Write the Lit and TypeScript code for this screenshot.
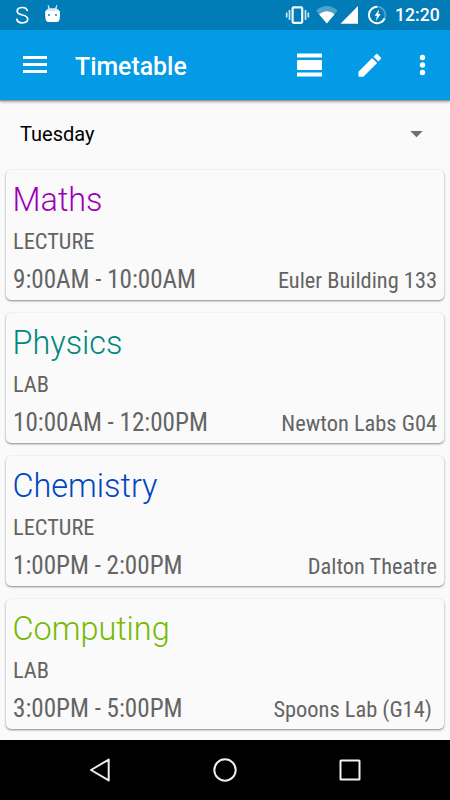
import { LitElement, html, css } from "lit";
import { customElement } from "lit/decorators.js";

interface Lesson {
  subject: string;
  tone: string;
  kind: string;
  time: string;
  place: string;
}

const lessons: Lesson[] = [
  { subject: "Maths", tone: "purple", kind: "LECTURE", time: "9:00AM - 10:00AM", place: "Euler Building 133" },
  { subject: "Physics", tone: "teal", kind: "LAB", time: "10:00AM - 12:00PM", place: "Newton Labs G04" },
  { subject: "Chemistry", tone: "blue", kind: "LECTURE", time: "1:00PM - 2:00PM", place: "Dalton Theatre" },
  { subject: "Computing", tone: "green", kind: "LAB", time: "3:00PM - 5:00PM", place: "Spoons Lab (G14)\u00a0" },
];

@customElement("status-bar")
class StatusBar extends LitElement {
  static styles = css`
    :host {
      display: flex;
      justify-content: space-between;
      height: 30px;
      background: #017cb7;
      color: #fff;
      font: 500 17.600px/31px Roboto, sans-serif;
    }
    svg { display: block; }
    .right { display: flex; }
    .clock { width: 55px; white-space: nowrap; }
  `;
  render() {
    return html`
      <svg width="80" height="30" viewBox="0 0 80 30" fill="none">
        <path d="M27.4 11.2C27 8.9 25 7.5 22.2 7.5c-2.8 0-5 1.4-5 3.7 0 5.200 10.500 2.300 10.500 7.800 0 2.300-2.300 3.800-5.300 3.800-3.200 0-5.500-1.600-5.700-4.200" stroke="#fff" stroke-width="1.700" />
        <path d="M45.500 11.500q.2-1.900 2.900-2.900L47.600 5.300l1-.3 1.300 3.200h5.200L56.400 5l1 .3-.8 3.300q2.700 1 2.900 2.900z" fill="#d3ebf6" />
        <path d="M45.300 11h14.600q.5 4.500-.3 8.500-.5 2.500-3 2.500h-8q-2.500 0-3-2.500-.8-4-.3-8.500z" fill="#fff" />
        <path d="M48 14h2v2h-2zM55 14h2v2h-2z" fill="#48a1cc" />
      </svg>
      <div class="right">
        <svg width="114" height="30" viewBox="281 0 114 30" fill="none">
          <rect x="292.600" y="7.400" width="9.600" height="15.400" rx="1" stroke="#f0f8fb" stroke-width="2.200" />
          <path d="M286.700 12.500v5M289.500 10v10M305.500 10v10M308.300 12.500v5" stroke="#cbe5f1" stroke-width="1.700" />
          <path d="M316 10.600Q326.700 1.500 337.600 10.600L326.800 23.600z" fill="#4da3cd" />
          <path d="M319 14.300Q326.800 8 334.600 14.300L326.800 23.600z" fill="#fff" />
          <path d="M340.500 23.800L358 6v17.800z" fill="#fff" />
          <circle cx="377.200" cy="15" r="8.200" stroke="#4da3cd" stroke-width="1.900" />
          <path d="M377.200 6.800a8.200 8.200 0 1 0 7.400 11.700" stroke="#fff" stroke-width="1.900" />
          <path d="M379 9.500l-4.400 6.200h2.300l-.9 5.300 4.600-7h-2.300z" fill="#fff" />
        </svg>
        <span class="clock">12:20</span>
      </div>
    `;
  }
}

@customElement("title-bar")
class TitleBar extends LitElement {
  static styles = css`
    :host {
      display: flex;
      height: 70px;
      background: #039be5;
      color: #fff;
      box-shadow: 0 1px 1px #9c9690, 0 2px 3px rgba(0, 0, 0, 0.3);
      z-index: 1;
    }
    svg { display: block; flex: none; }
    .title {
      flex: 1;
      margin: 0;
      font: 500 24.850px/73px Roboto, sans-serif;
    }
  `;
  render() {
    return html`
      <svg width="75" height="70" viewBox="0 30 75 70">
        <path d="M23 56h24v3H23zM23 63h24v3H23zM23 70h24v3H23z" fill="#fff" />
      </svg>
      <h1 class="title">Timetable</h1>
      <svg width="165" height="70" viewBox="285 30 165 70" fill="#fff">
        <path d="M297 53.500h25v4h-25zM297 72.500h25v4h-25z" />
        <rect x="297" y="60" width="25" height="10" rx="1" />
        <path d="M358.500 71.800L372.200 58.100L377.100 63L363.400 76.700H358.500z" />
        <path d="M373.500 56.700l2.500-2.500q.8-.8 1.600 0l3.200 3.200q.8.800 0 1.600l-2.500 2.500z" />
        <circle cx="422.500" cy="57.500" r="2.700" />
        <circle cx="422.500" cy="65" r="2.700" />
        <circle cx="422.500" cy="72.500" r="2.700" />
      </svg>
    `;
  }
}

@customElement("day-picker")
class DayPicker extends LitElement {
  static styles = css`
    :host {
      display: flex;
      align-items: flex-start;
      justify-content: space-between;
      height: 70px;
      padding: 0 27px 0 20px;
      box-sizing: border-box;
      color: #000;
      font: 400 20px/69px Roboto, sans-serif;
    }
    svg { margin-top: 31px; }
  `;
  render() {
    return html`
      <span>Tuesday</span>
      <svg width="13" height="7" viewBox="0 0 13 7"><path d="M.3 0h12.400L6.500 6.200z" fill="#6e6e6e" /></svg>
    `;
  }
}

@customElement("lesson-card")
class LessonCard extends LitElement {
  static properties = { lesson: { attribute: false } };
  declare lesson: Lesson;

  static styles = css`
    :host {
      display: block;
      box-sizing: border-box;
      height: 130px;
      padding: 7px 7px 0;
      border-radius: 5px;
      background: #fafafa;
      box-shadow: 0 1px 2px rgba(0, 0, 0, 0.35), 0 1px 3px rgba(0, 0, 0, 0.15);
      color: #646464;
      font-family: "Roboto Condensed", Roboto, sans-serif;
      font-stretch: 75%;
      white-space: nowrap;
    }
    .subject {
      margin: 0 0 0 -0.5px;
      font: 300 32.400px/46px Roboto, sans-serif;
    }
    .purple { color: #9c00b4; }
    .teal { color: #00897b; }
    .blue { color: #0046be; }
    .green { color: #76b900; }
    .kind { font-size: 22.400px; line-height: 37px; }
    .row { display: flex; justify-content: space-between; }
    .time { font-size: 25.100px; line-height: 40px; }
    .place { font-size: 22.400px; line-height: 40px; }
  `;
  render() {
    const l = this.lesson;
    return html`
      <h2 class="subject ${l.tone}">${l.subject}</h2>
      <div class="kind">${l.kind}</div>
      <div class="row"><span class="time">${l.time}</span><span class="place">${l.place}</span></div>
    `;
  }
}

@customElement("nav-bar")
class NavBar extends LitElement {
  static styles = css`
    :host {
      display: flex;
      justify-content: center;
      align-items: center;
      gap: 95px;
      height: 60px;
      background: #000;
    }
    svg { display: block; }
  `;
  render() {
    return html`
      <svg width="30" height="30" viewBox="0 0 30 30" fill="none"><path d="M6 15L23.700 4.600v20.800z" stroke="#ededed" stroke-width="2" stroke-linejoin="round" /></svg>
      <svg width="30" height="30" viewBox="0 0 30 30" fill="none"><circle cx="15" cy="15" r="10.700" stroke="#ededed" stroke-width="2" /></svg>
      <svg width="30" height="30" viewBox="0 0 30 30" fill="none"><rect x="5.500" y="5.500" width="19" height="19" rx=".5" stroke="#f2f2f2" stroke-width="2" /></svg>
    `;
  }
}

@customElement("app-root")
class AppRoot extends LitElement {
  static styles = css`
    :host {
      display: flex;
      flex-direction: column;
      width: 450px;
      height: 800px;
      background: #fafafa;
      overflow: hidden;
    }
    .list {
      flex: 1;
      display: flex;
      flex-direction: column;
      gap: 13px;
      padding: 0 6px;
    }
  `;
  render() {
    return html`
      <status-bar></status-bar>
      <title-bar></title-bar>
      <day-picker></day-picker>
      <main class="list">${lessons.map((l) => html`<lesson-card .lesson=${l}></lesson-card>`)}</main>
      <nav-bar></nav-bar>
    `;
  }
}
